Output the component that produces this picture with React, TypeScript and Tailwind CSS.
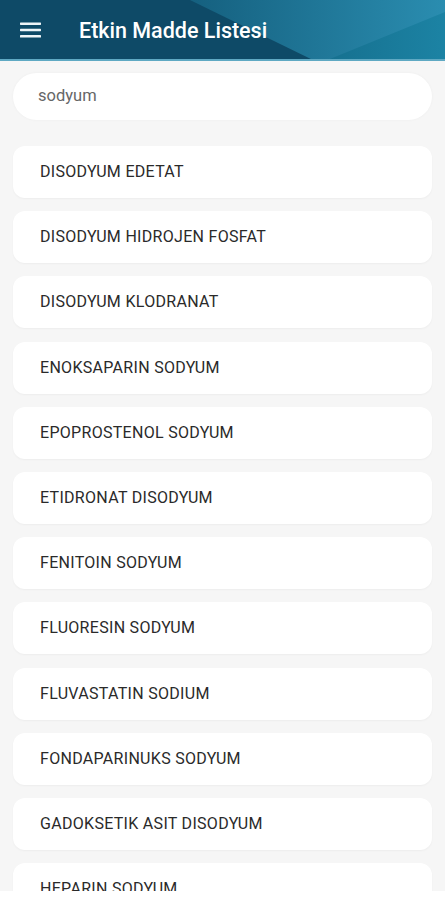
import React from "react";

const items = [
  "DISODYUM EDETAT",
  "DISODYUM HIDROJEN FOSFAT",
  "DISODYUM KLODRANAT",
  "ENOKSAPARIN SODYUM",
  "EPOPROSTENOL SODYUM",
  "ETIDRONAT DISODYUM",
  "FENITOIN SODYUM",
  "FLUORESIN SODYUM",
  "FLUVASTATIN SODIUM",
  "FONDAPARINUKS SODYUM",
  "GADOKSETIK ASIT DISODYUM",
  "HEPARIN SODYUM",
  "HEPARIN SODYUM 2",
];

export default function App() {
  return (
    <div
      className="w-[445px] h-[900px] flex flex-col overflow-hidden bg-[#f6f6f6]"
      style={{ fontFamily: "Roboto, 'Liberation Sans', sans-serif" }}
    >
      <header className="relative h-[61px] shrink-0 bg-[#0e4a67] overflow-hidden border-b-2 border-[#5fa9c3]">
        <svg className="absolute inset-0" width="445" height="61" viewBox="0 0 445 61" preserveAspectRatio="none">
          <defs>
            <linearGradient id="g1" x1="0" y1="0" x2="1" y2="0">
              <stop offset="0" stopColor="#15607f" />
              <stop offset="1" stopColor="#2a8db0" />
            </linearGradient>
            <linearGradient id="g2" x1="0" y1="0" x2="1" y2="0">
              <stop offset="0" stopColor="#16708f" />
              <stop offset="1" stopColor="#1c83a4" />
            </linearGradient>
          </defs>
          <rect width="445" height="61" fill="#0e4a67" />
          <polygon points="190,0 445,0 445,61 315,61" fill="url(#g1)" />
          <polygon points="325,61 445,12 445,61" fill="url(#g2)" />
        </svg>
        <div className="relative flex items-center h-full">
          <div className="w-[79px] flex items-center pl-[20px]">
            <svg width="22" height="16" viewBox="0 0 22 16">
              <rect x="0" y="0.5" width="21" height="2.4" rx="0.6" fill="#eef5f8" />
              <rect x="0" y="6.8" width="21" height="2.4" rx="0.6" fill="#eef5f8" />
              <rect x="0" y="13.1" width="21" height="2.4" rx="0.6" fill="#eef5f8" />
            </svg>
          </div>
          <span className="text-white text-[21.5px] font-medium mt-[3px]">Etkin Madde Listesi</span>
        </div>
      </header>
      <div className="px-[13px] pt-[12px] shrink-0">
        <div className="h-[47px] rounded-full bg-white flex items-center pl-[25px] shadow-[0_0_3px_rgba(0,0,0,0.04)]">
          <span className="text-[16.5px] text-[#666]">sodyum</span>
        </div>
      </div>
      <div className="h-[771px] overflow-hidden px-[13px] pt-[26px] shrink-0">
        <div className="flex flex-col gap-[13.2px]">
          {items.map((t) => (
            <div
              key={t}
              className="h-[52px] shrink-0 rounded-[12px] bg-white flex items-center pl-[27px] shadow-[0_1px_2px_rgba(0,0,0,0.04)]"
            >
              <span className="text-[16px] tracking-[0.3px] text-[#2a2a2a]">{t}</span>
            </div>
          ))}
        </div>
      </div>
      <div className="flex-1 bg-white" />
    </div>
  );
}
